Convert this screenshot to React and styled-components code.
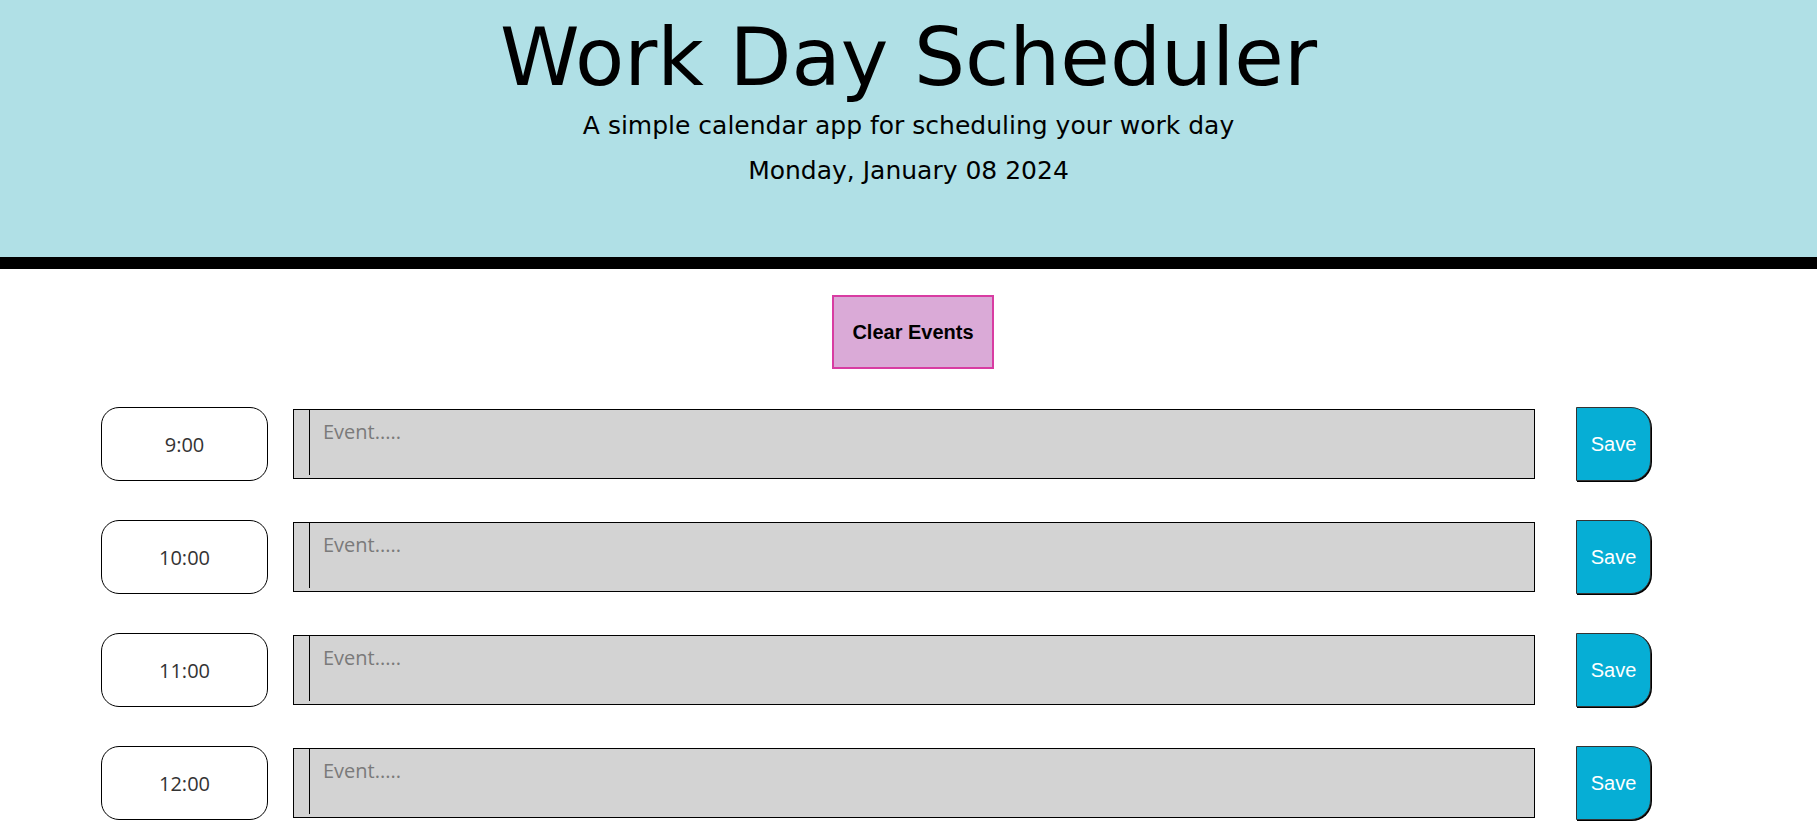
import styled, { createGlobalStyle } from 'styled-components'

const GlobalStyle = createGlobalStyle`
  body {
    margin: 0;
    font-family: "Open Sans", "Liberation Sans", sans-serif;
    background: #fff;
  }
`

const Header = styled.header`
  background-color: #b0e0e6;
  border-bottom: 12px solid #000;
  text-align: center;
  padding: 11px 0 72px;
  font-family: "DejaVu Sans", sans-serif;
  color: #000;

  h1 {
    margin: 0;
    font-size: 80.5px;
    line-height: 93px;
    font-weight: 400;
  }

  .lead {
    margin: 7px 0 0;
    font-size: 25px;
    line-height: 29px;
  }

  .date {
    margin: 16px 0 0;
    font-size: 25px;
    line-height: 29px;
  }
`

const Main = styled.main`
  display: flex;
  flex-direction: column;
  align-items: center;
  padding-top: 26px;
`

const ClearButton = styled.button`
  width: 162px;
  height: 74px;
  margin-left: 9px;
  background-color: #daaad7;
  border: 2px solid #d83ca2;
  font-family: "Liberation Sans", Arial, sans-serif;
  font-size: 20px;
  font-weight: 700;
  color: #000;
  cursor: pointer;
`

const Rows = styled.div`
  width: 100%;
  display: flex;
  flex-direction: column;
  gap: 39px;
  padding: 38px 166px 40px 101px;
  box-sizing: border-box;
`

const Row = styled.div`
  display: flex;
  align-items: center;
  height: 74px;
`

const Hour = styled.div`
  width: 167px;
  height: 74px;
  box-sizing: border-box;
  border: 1px solid #000;
  border-radius: 18px;
  display: flex;
  align-items: center;
  justify-content: center;
  font-size: 20px;
  color: #333;
`

const EventBox = styled.div`
  flex: 1;
  height: 70px;
  margin-left: 25px;
  box-sizing: border-box;
  background-color: #d3d3d3;
  border: 1px solid #000;
  padding: 0 0 3px 15px;
  display: flex;
`

const EventInput = styled.textarea`
  flex: 1;
  resize: none;
  border: none;
  border-left: 1px solid #000;
  background: transparent;
  font-family: "Open Sans", sans-serif;
  font-size: 20px;
  padding: 8px 13px;
  outline: none;

  &::placeholder {
    color: #7a7a7a;
  }
`

const SaveButton = styled.button`
  width: 75px;
  height: 74px;
  margin-left: 41px;
  background-color: #06aed5;
  border: 1px solid #333;
  border-radius: 0 20px 20px 0;
  box-shadow: 1px 1px 0 #000;
  color: #fff;
  font-family: "Liberation Sans", Arial, sans-serif;
  font-size: 20px;
  padding: 0;
  cursor: pointer;
`

const hours = ['9:00', '10:00', '11:00', '12:00', '13:00', '14:00', '15:00', '16:00', '17:00']

const App = () => {
  return (
    <>
      <GlobalStyle />
      <Header>
        <h1>Work Day Scheduler</h1>
        <p className='lead'>A simple calendar app for scheduling your work day</p>
        <p className='date'>Monday, January 08 2024</p>
      </Header>
      <Main>
        <ClearButton>Clear Events</ClearButton>
        <Rows>
          {hours.map((hour) => (
            <Row key={hour}>
              <Hour>{hour}</Hour>
              <EventBox>
                <EventInput placeholder='Event.....' />
              </EventBox>
              <SaveButton>Save</SaveButton>
            </Row>
          ))}
        </Rows>
      </Main>
    </>
  )
}

export default App
